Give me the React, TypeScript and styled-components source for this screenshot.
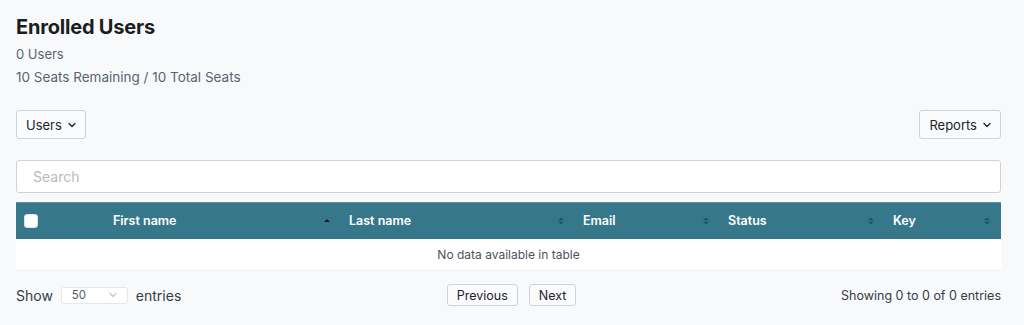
import React from "react";
import styled, { createGlobalStyle } from "styled-components";

const Global = createGlobalStyle`
  html, body { margin: 0; padding: 0; background: #f8f9fb; }
  body { font-family: Inter, "Noto Sans", "Liberation Sans", sans-serif; color: #1f2329; }
  * { box-sizing: border-box; }
`;

const Page = styled.div`
  padding: 14px 23px 0 16px;
  display: flex;
  flex-direction: column;
`;

const Title = styled.h1`
  margin: 0;
  font-size: 20px;
  font-weight: 700;
  line-height: 26px;
  color: #1b1d21;
  letter-spacing: -0.2px;
`;

const Meta = styled.div<{ $size?: number; $top?: number }>`
  margin-top: ${(p) => p.$top ?? 0}px;
  font-size: ${(p) => p.$size ?? 13}px;
  line-height: 18px;
  color: #5b6370;
`;

const Toolbar = styled.div`
  margin-top: 24px;
  display: flex;
  justify-content: space-between;
  align-items: center;
`;

const DropButton = styled.button`
  height: 29px;
  padding: 0 9px;
  display: inline-flex;
  align-items: center;
  gap: 6px;
  background: #fafbfc;
  border: 1px solid #cfd3d8;
  border-radius: 3px;
  font-family: inherit;
  font-size: 13px;
  color: #1f2329;
`;

const Search = styled.input`
  margin-top: 21px;
  height: 33px;
  width: 100%;
  padding: 0 16px;
  border: 1px solid #cfd3d8;
  border-radius: 3px;
  background: #fff;
  font-family: inherit;
  font-size: 14px;
  outline: none;
  &::placeholder { color: #b6bbc2; }
`;

const Table = styled.table`
  margin-top: 9px;
  width: 100%;
  border-collapse: collapse;
  table-layout: fixed;
`;

const HeadRow = styled.tr`
  background: #36778a;
  height: 36px;
`;

const Th = styled.th`
  position: relative;
  padding: 0 8px;
  text-align: left;
  font-size: 12.5px;
  font-weight: 600;
  color: #fff;
  border-top: 1px solid #5b93a3;
`;

const SortIcon = styled.span`
  position: absolute;
  right: 10px;
  top: 50%;
  transform: translateY(-50%);
  display: flex;
`;

const Check = styled.span`
  display: block;
  width: 14px;
  height: 14px;
  background: #fff;
  border-radius: 3px;
  border: 1px solid #dfe3e6;
`;

const EmptyCell = styled.td`
  height: 32px;
  background: #fff;
  text-align: center;
  font-size: 12px;
  color: #4b5360;
  border-bottom: 1px solid #eef0f3;
`;

const Footer = styled.div`
  margin-top: 13px;
  display: grid;
  grid-template-columns: 1fr auto 1fr;
  align-items: center;
`;

const Length = styled.div`
  display: flex;
  align-items: center;
  gap: 8px;
  font-size: 14px;
  color: #343c48;
`;

const FakeSelect = styled.span`
  width: 67px;
  height: 17px;
  display: inline-flex;
  align-items: center;
  justify-content: space-between;
  padding: 0 10px 0 10px;
  background: #fff;
  border: 1px solid #e3e6ea;
  border-radius: 3px;
  font-size: 11.5px;
  color: #555d68;
`;

const Pager = styled.div`
  display: flex;
  gap: 11px;
  margin-left: 6px;
`;

const PageButton = styled.button`
  height: 22px;
  padding: 0 9px;
  background: #fafbfc;
  border: 1px solid #cfd3d8;
  border-radius: 3px;
  font-family: inherit;
  font-size: 12.5px;
  color: #1f2329;
`;

const Info = styled.div`
  justify-self: end;
  font-size: 12.5px;
  color: #343c48;
`;

const Chevron = ({ color = "#1f2329" }: { color?: string }) => (
  <svg width="8" height="6" viewBox="0 0 8 6">
    <path d="M1 1.5 L4 4.5 L7 1.5" fill="none" stroke={color} strokeWidth="1.3" strokeLinecap="round" strokeLinejoin="round" />
  </svg>
);

const Sort = ({ active }: { active?: boolean }) => (
  <SortIcon>
    {active ? (
      <svg width="8" height="10" viewBox="0 0 8 10">
        <path d="M1 6 L4 3 L7 6 Z" fill="#0f1c22" />
      </svg>
    ) : (
      <svg width="8" height="10" viewBox="0 0 8 10">
        <path d="M1.2 4.2 L4 1.4 L6.8 4.2 Z" fill="#23515f" />
        <path d="M1.2 5.8 L4 8.6 L6.8 5.8 Z" fill="#23515f" />
      </svg>
    )}
  </SortIcon>
);

const columns = [
  { label: "First name", width: 236, active: true },
  { label: "Last name", width: 234 },
  { label: "Email", width: 145 },
  { label: "Status", width: 165 },
  { label: "Key", width: 116 },
];

export default function App() {
  return (
    <Page>
      <Global />
      <Title>Enrolled Users</Title>
      <Meta $top={5}>0 Users</Meta>
      <Meta $top={5} $size={13.5}>10 Seats Remaining / 10 Total Seats</Meta>
      <Toolbar>
        <DropButton>Users <Chevron /></DropButton>
        <DropButton>Reports <Chevron /></DropButton>
      </Toolbar>
      <Search placeholder="Search" />
      <Table>
        <colgroup>
          <col style={{ width: 89 }} />
          {columns.map((c) => (
            <col key={c.label} style={{ width: c.width }} />
          ))}
        </colgroup>
        <thead>
          <HeadRow>
            <Th><Check /></Th>
            {columns.map((c) => (
              <Th key={c.label}>
                {c.label}
                <Sort active={c.active} />
              </Th>
            ))}
          </HeadRow>
        </thead>
        <tbody>
          <tr>
            <EmptyCell colSpan={6}>No data available in table</EmptyCell>
          </tr>
        </tbody>
      </Table>
      <Footer>
        <Length>
          Show
          <FakeSelect>50 <Chevron color="#c3c7cc" /></FakeSelect>
          entries
        </Length>
        <Pager>
          <PageButton>Previous</PageButton>
          <PageButton>Next</PageButton>
        </Pager>
        <Info>Showing 0 to 0 of 0 entries</Info>
      </Footer>
    </Page>
  );
}
